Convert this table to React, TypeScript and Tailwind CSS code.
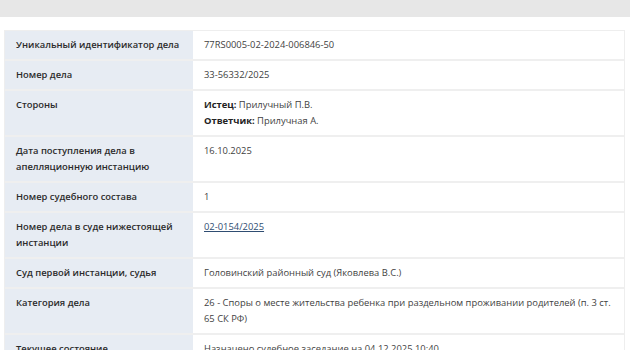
import React from "react";

type Row = { label: string; value: React.ReactNode };

const rows: Row[] = [
  { label: "Уникальный идентификатор дела", value: "77RS0005-02-2024-006846-50" },
  { label: "Номер дела", value: "33-56332/2025" },
  {
    label: "Стороны",
    value: (
      <>
        <div>
          <span className="font-bold text-[#222]">Истец:</span> Прилучный П.В.
        </div>
        <div>
          <span className="font-bold text-[#222]">Ответчик:</span> Прилучная А.
        </div>
      </>
    ),
  },
  { label: "Дата поступления дела в апелляционную инстанцию", value: "16.10.2025" },
  { label: "Номер судебного состава", value: "1" },
  {
    label: "Номер дела в суде нижестоящей инстанции",
    value: (
      <a href="#" className="text-[#2f4d72] underline">
        02-0154/2025
      </a>
    ),
  },
  { label: "Суд первой инстанции, судья", value: "Головинский районный суд (Яковлева В.С.)" },
  {
    label: "Категория дела",
    value:
      "26 - Споры о месте жительства ребенка при раздельном проживании родителей (п. 3 ст. 65 СК РФ)",
  },
  { label: "Текущее состояние", value: "Назначено судебное заседание на 04.12.2025 10:40" },
];

const App = () => {
  return (
    <div className="w-[630px] h-[350px] overflow-hidden bg-white font-['Open_Sans','Noto_Sans',sans-serif] text-[9.4px] leading-[16px]">
      <div className="h-[17px] bg-[#e7e7e7]"></div>
      <div className="flex pt-[13px] pl-[4px] pr-[5px]">
        <div className="flex-1 border border-[#eeeeee]">
          {rows.map((r, i) => (
            <div key={i} className="flex border-b-2 border-[#efefef]">
              <div className="w-[188px] shrink-0 bg-[#e7ecf3] pl-[11px] pr-[6px] py-[6px] font-semibold text-[#2b2b2b]">
                {r.label}
              </div>
              <div className="flex-1 pl-[11px] pr-[8px] py-[6px] text-[#3f3f3f]">{r.value}</div>
            </div>
          ))}
        </div>
      </div>
    </div>
  );
};

export default App;
